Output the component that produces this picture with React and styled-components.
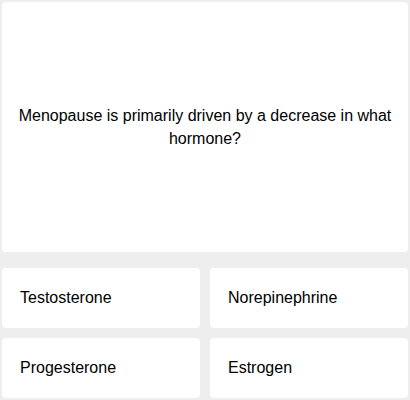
import React from "react";
import styled, { createGlobalStyle } from "styled-components";

const Global = createGlobalStyle`
  html, body { margin: 0; padding: 0; background: #eeeeee; }
  body { font-family: "Liberation Sans", Arial, sans-serif; }
`;

const Page = styled.div`
  box-sizing: border-box;
  width: 410px;
  height: 400px;
  padding: 2px;
  display: grid;
  grid-template-rows: 250px 1fr;
  gap: 16px;
`;

const QuestionCard = styled.div`
  background: #fff;
  border-radius: 4px;
  display: flex;
  align-items: center;
  justify-content: center;
  padding: 0 14px;
  text-align: center;
  font-size: 16px;
  line-height: 23px;
  color: #000;
`;

const Answers = styled.div`
  display: grid;
  grid-template-columns: 1fr 1fr;
  grid-template-rows: 60px 60px;
  gap: 10px;
`;

const Answer = styled.button`
  all: unset;
  box-sizing: border-box;
  background: #fff;
  border-radius: 4px;
  display: flex;
  align-items: center;
  padding-left: 18px;
  font-family: "Liberation Sans", Arial, sans-serif;
  font-size: 16px;
  color: #000;
  cursor: pointer;
`;

const answers = ["Testosterone", "Norepinephrine", "Progesterone", "Estrogen"];

export default function App() {
  return (
    <>
      <Global />
      <Page>
        <QuestionCard>
          Menopause is primarily driven by a decrease in what hormone?
        </QuestionCard>
        <Answers>
          {answers.map((a) => (
            <Answer key={a}>{a}</Answer>
          ))}
        </Answers>
      </Page>
    </>
  );
}
